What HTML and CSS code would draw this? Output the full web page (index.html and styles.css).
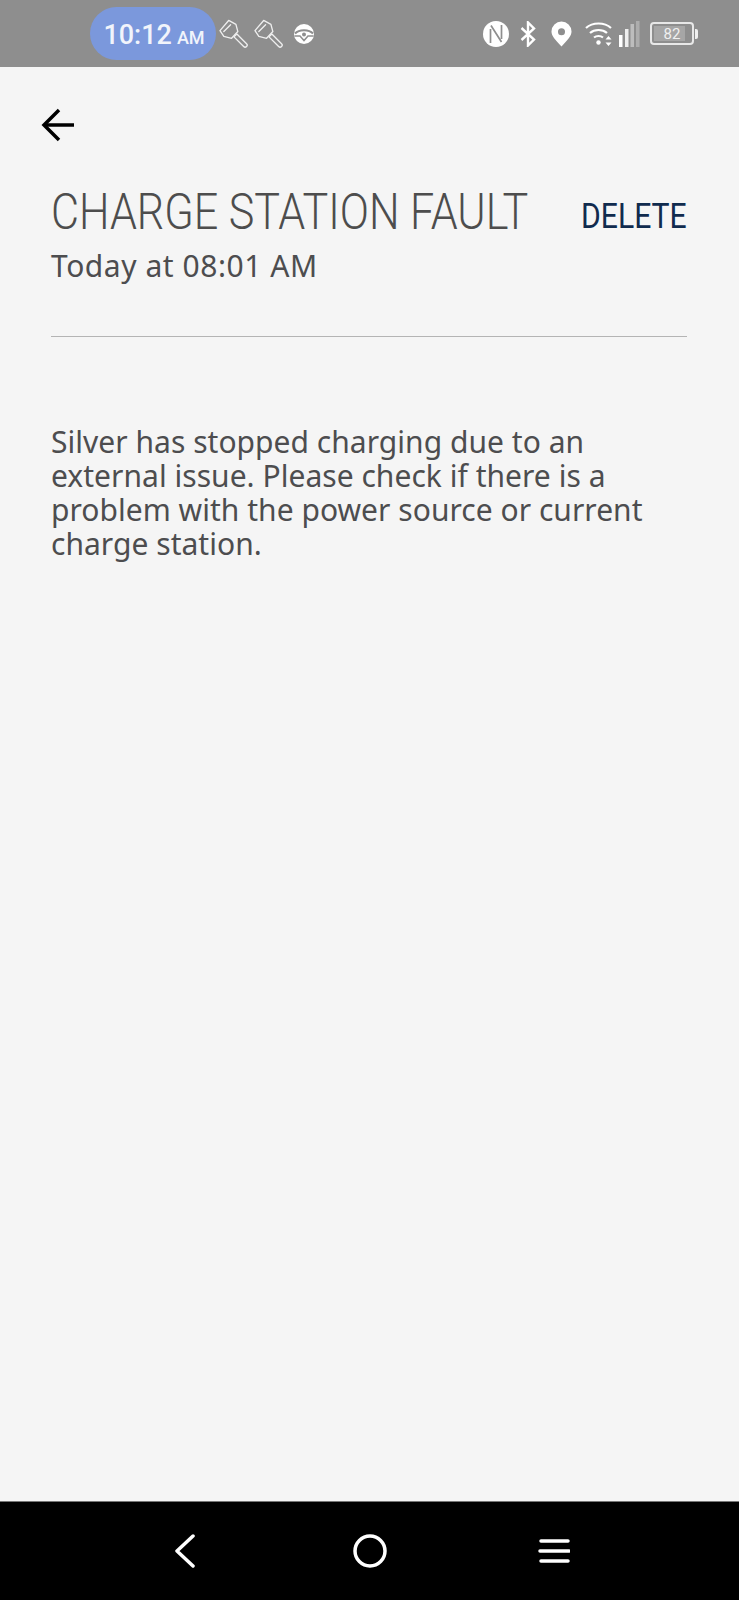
FILE: index.html
```html
<!DOCTYPE html>
<html lang="en">
<head>
<meta charset="utf-8">
<title>Charge station fault</title>
<link rel="stylesheet" href="styles.css">
</head>
<body>
<div class="screen">
  <header class="status">
    <div class="pill"><span class="clock">10:12</span><span class="ampm">AM</span></div>
    <div class="status-left">
      <svg class="ic-key" viewBox="0 0 30 30" fill="none" stroke="#fff" stroke-width="1.4" stroke-linejoin="round" stroke-linecap="round"><path d="M1 12 10 1.500l7.500 4 2 7.500-6.500 7-8-2z"/><path d="M5 13 12 6"/><path d="M15.500 18.500l3-3 10 10a2 2 0 0 1-3 3z"/></svg>
      <svg class="ic-key" viewBox="0 0 30 30" fill="none" stroke="#fff" stroke-width="1.4" stroke-linejoin="round" stroke-linecap="round"><path d="M1 12 10 1.500l7.500 4 2 7.500-6.500 7-8-2z"/><path d="M5 13 12 6"/><path d="M15.500 18.500l3-3 10 10a2 2 0 0 1-3 3z"/></svg>
      <svg class="ic-wheel" viewBox="0 0 22 22"><circle cx="11" cy="11" r="10" fill="#fff"/><path d="M2 10.500C6 6 16 6 20 10.500" fill="none" stroke="#8e8e8e" stroke-width="2"/><path d="M1.500 13H7l4 4.500 4-4.500h5.500" fill="none" stroke="#8e8e8e" stroke-width="1.500"/><circle cx="11" cy="11.500" r="2" fill="#8e8e8e"/></svg>
    </div>
    <div class="status-right">
      <svg class="ic-nfc" viewBox="0 0 26 26"><circle cx="13" cy="13" r="13" fill="#fff"/><path d="M7.500 22V8M18.500 18V4M8 4.500 18.500 21" fill="none" stroke="#8e8e8e" stroke-width="1.700"/></svg>
      <svg class="ic-bt" viewBox="0 0 16 26" fill="none" stroke="#fff" stroke-width="2.400"><path d="M1.500 7 14 18.500 8 24.500V1.500l6 6L1.500 19"/></svg>
      <svg class="ic-pin" viewBox="0 0 22 26"><path fill-rule="evenodd" fill="#fff" d="M11 26C4 19 0.500 15 0.500 10.500a10.500 10.500 0 0 1 21 0C21.500 15 18 19 11 26zM11 7a3.700 3.700 0 1 0 0 7.400A3.700 3.700 0 0 0 11 7z"/></svg>
      <svg class="ic-wifi" viewBox="0 0 28 26" fill="none" stroke="#fff" stroke-width="2.200"><path d="M1 7C7.500 1 19.500 1 26 7"/><path d="M5 12c4.500-4 12.500-4 17 0"/><path d="M9 16.500c2.500-2 6.500-2 9 0"/><circle cx="13.500" cy="21.500" r="2.200" fill="#fff" stroke="none"/><path d="M23.500 15l3 3.500h-6zM23.500 25l3-3.500h-6z" fill="#fff" stroke="none"/></svg>
      <svg class="ic-signal" viewBox="0 0 21 26"><rect x="0" y="14" width="3.500" height="12" fill="#fff"/><rect x="6" y="8" width="3.500" height="18" fill="#eee"/><rect x="11.500" y="3" width="3.500" height="23" fill="#bdbdbd"/><rect x="17" y="0" width="3.500" height="26" fill="#adadad"/></svg>
      <div class="battery"><div class="battery-body"><span class="battery-level">82</span></div><div class="battery-cap"></div></div>
    </div>
  </header>

  <main class="content">
    <button class="back" type="button" aria-label="Back">
      <svg viewBox="0 0 34 34" fill="none" stroke="#000" stroke-width="3.500"><path d="M33 17H3"/><path d="M18 2 3 17l15 15"/></svg>
    </button>
    <div class="heading">
      <div class="heading-text">
        <h1 class="title">CHARGE STATION FAULT</h1>
        <p class="time">Today at 08:01 AM</p>
      </div>
      <button class="delete" type="button">DELETE</button>
    </div>
    <hr class="rule">
    <p class="message">Silver has stopped charging due to an external issue. Please check if there is a problem with the power source or current charge station.</p>
  </main>

  <nav class="navbar">
    <svg class="nav-back" viewBox="0 0 20 34" fill="none" stroke="#fff" stroke-width="3.500" stroke-linecap="round" stroke-linejoin="round"><path d="M18 2 2 17l16 15"/></svg>
    <svg class="nav-home" viewBox="0 0 34 34" fill="none" stroke="#fff" stroke-width="3.500"><circle cx="17" cy="17" r="15"/></svg>
    <svg class="nav-menu" viewBox="0 0 32 26" fill="none" stroke="#fff" stroke-width="3.500" stroke-linecap="round"><path d="M3 3h27M2 13h29M3 23h27"/></svg>
  </nav>
</div>
</body>
</html>
```

FILE: styles.css
```css
* { box-sizing: border-box; }
html, body { margin: 0; height: 100%; }
body { background: #f5f5f5; font-family: "Noto Sans", "Liberation Sans", sans-serif; }

.screen { display: flex; flex-direction: column; height: 1600px; overflow: hidden; }

.status {
  flex: none;
  height: 67px;
  background: #8e8e8e;
  display: flex;
  align-items: center;
  padding-left: 90px;
  color: #fff;
  font-family: Roboto, sans-serif;
}
.pill {
  width: 126px;
  height: 53px;
  border-radius: 27px;
  background: #7b98dc;
  display: flex;
  align-items: baseline;
  justify-content: center;
  gap: 5px;
  padding-top: 12px;
  padding-left: 2px;
  color: #f1f4fb;
}
.clock { font-size: 27px; line-height: 32px; font-weight: 500; }
.ampm { font-size: 18px; font-weight: 500; }

.status-left { display: flex; align-items: center; gap: 6px; margin-left: 3px; }
.ic-key { width: 29px; height: 29px; display: block; opacity: .85; }
.ic-wheel { width: 22px; height: 22px; display: block; margin-left: 4px; }

.status-right { display: flex; align-items: center; margin-left: auto; padding-right: 41px; }
.ic-nfc { width: 26px; height: 26px; display: block; }
.ic-bt { width: 16px; height: 26px; display: block; margin-left: 11px; }
.ic-pin { width: 21px; height: 26px; display: block; margin-left: 15px; }
.ic-wifi { width: 28px; height: 26px; display: block; margin-left: 13px; }
.ic-signal { width: 21px; height: 26px; display: block; margin-left: 6px; }

.battery { display: flex; align-items: center; margin-left: 10px; }
.battery-body {
  width: 44px;
  height: 23px;
  border: 2px solid #e8e8e8;
  border-radius: 4px;
  background: linear-gradient(90deg, #a6a6a6 82%, transparent 82%);
  background-clip: content-box;
  padding: 2px;
  display: flex;
  align-items: center;
  justify-content: center;
}
.battery-level { font-size: 15px; line-height: 16px; color: #f0f0f0; }
.battery-cap { width: 3px; height: 10px; background: #f0f0f0; border-radius: 0 2px 2px 0; margin-left: 1px; }

.content { flex: 1; padding: 41px 52px 0 51px; }

.back {
  display: block;
  width: 34px;
  height: 34px;
  padding: 0;
  margin-left: -10px;
  border: 0;
  background: none;
}
.back svg { display: block; width: 34px; height: 34px; }

.heading { display: flex; justify-content: space-between; align-items: flex-start; margin-top: 41px; }
.heading-text { flex: 1; min-width: 0; }
.title {
  margin: 0;
  font-family: Roboto, "Liberation Sans", sans-serif;
  font-weight: 300;
  font-size: 50px;
  line-height: 58px;
  color: #4d4d4d;
  white-space: nowrap;
  transform: scaleX(0.862);
  transform-origin: left center;
}
.time { margin: 5px 0 0; font-size: 30px; line-height: 40px; letter-spacing: .55px; color: #4d4d4f; }
.delete {
  flex: none;
  padding: 0;
  margin-top: 14px;
  border: 0;
  background: none;
  font-family: Roboto, "Liberation Sans", sans-serif;
  font-size: 35px;
  line-height: 40px;
  color: #102b4e;
  transform: scaleX(0.861);
  transform-origin: right center;
}

.rule { margin: 50px 0 0; border: 0; height: 1px; background: #b4b4b4; }

.message { margin: 88px 0 0; font-size: 30px; line-height: 34px; letter-spacing: .03px; color: #4d4d4f; }

.navbar {
  flex: none;
  height: 99px;
  background: #000;
  border-top: 1px solid #777;
  display: flex;
  align-items: center;
  padding: 0 169px 0 175px;
  justify-content: space-between;
}
.nav-back { width: 20px; height: 34px; display: block; }
.nav-home { width: 34px; height: 34px; display: block; margin-left: 7px; }
.nav-menu { width: 32px; height: 26px; display: block; }
```
